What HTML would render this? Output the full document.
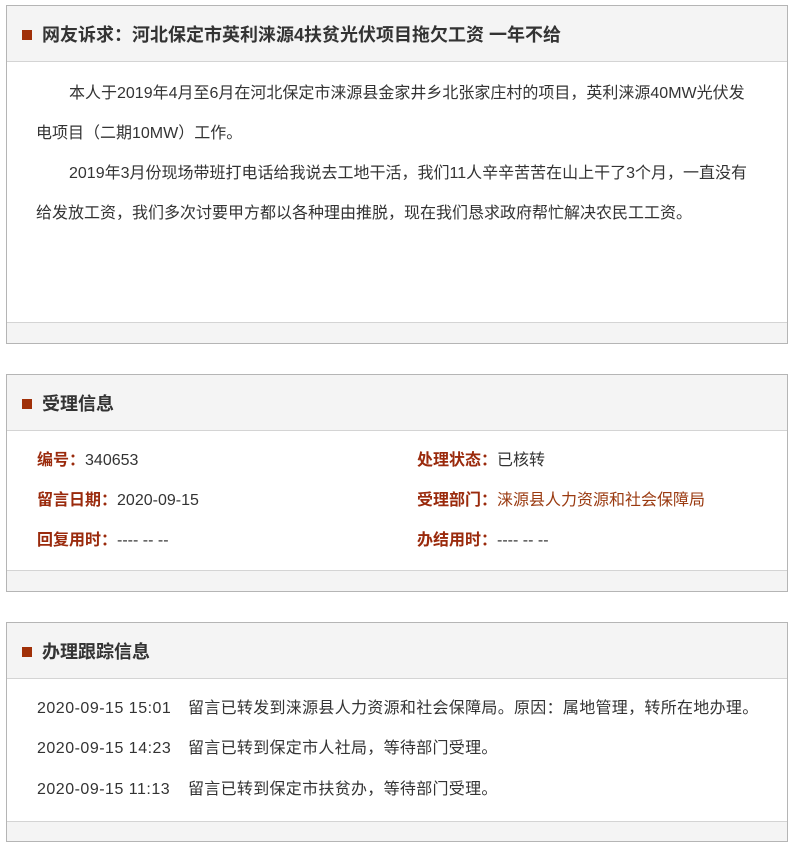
<!DOCTYPE html>
<html><head><meta charset="utf-8"><style>
*{margin:0;padding:0;box-sizing:border-box}
body{width:790px;height:826px;overflow:hidden;background:#fff;font-family:"Liberation Sans","Noto Sans CJK SC",sans-serif;color:#333;font-size:16px}
.box{position:absolute;left:6px;width:782px;border:1px solid #b5b5b5;background:#fff;overflow:hidden}
.hd{height:56px;background:#f4f4f4;border-bottom:1px solid #d4d4d4;position:relative}
.hd i{position:absolute;left:15px;top:24px;width:10px;height:10px;background:#a03008}
.hd b{position:absolute;left:35px;top:17px;font-size:18px;color:#333;line-height:24px;white-space:nowrap}
.ft{position:absolute;left:0;right:0;bottom:0;height:21px;background:#f4f4f4;border-top:1px solid #d4d4d4}
.l{position:absolute;white-space:nowrap;line-height:20px}
.lb{color:#9a2a0c;font-weight:bold}
.br{color:#9a3a10}
</style></head><body>
<div class="box" style="top:5px;height:339px">
<div class="hd"><i></i><b>网友诉求：河北保定市英利涞源4扶贫光伏项目拖欠工资 一年不给</b></div>
<div class="l" style="left:62px;top:78px">本人于2019年4月至6月在河北保定市涞源县金家井乡北张家庄村的项目，英利涞源40MW光伏发</div>
<div class="l" style="left:29px;top:118px">电项目（二期10MW）工作。</div>
<div class="l" style="left:62px;top:158px">2019年3月份现场带班打电话给我说去工地干活，我们11人辛辛苦苦在山上干了3个月，一直没有</div>
<div class="l" style="left:29px;top:198px">给发放工资，我们多次讨要甲方都以各种理由推脱，现在我们恳求政府帮忙解决农民工工资。</div>
<div class="ft"></div>
</div>
<div class="box" style="top:374px;height:218px">
<div class="hd"><i></i><b>受理信息</b></div>
<div class="l" style="left:30px;top:76px"><span class="lb">编号：</span>340653</div>
<div class="l" style="left:30px;top:116px"><span class="lb">留言日期：</span>2020-09-15</div>
<div class="l" style="left:30px;top:156px"><span class="lb">回复用时：</span>---- -- --</div>
<div class="l" style="left:410px;top:76px"><span class="lb">处理状态：</span>已核转</div>
<div class="l" style="left:410px;top:116px"><span class="lb">受理部门：</span><span class="br">涞源县人力资源和社会保障局</span></div>
<div class="l" style="left:410px;top:156px"><span class="lb">办结用时：</span>---- -- --</div>
<div class="ft"></div>
</div>
<div class="box" style="top:622px;height:220px">
<div class="hd"><i></i><b>办理跟踪信息</b></div>
<div class="l" style="left:30px;top:76px;letter-spacing:0.5px">2020-09-15 15:01</div><div class="l" style="left:181px;top:76px;letter-spacing:0.3px">留言已转发到涞源县人力资源和社会保障局。原因：属地管理，转所在地办理。</div>
<div class="l" style="left:30px;top:116px;letter-spacing:0.5px">2020-09-15 14:23</div><div class="l" style="left:181px;top:116px;letter-spacing:0.3px">留言已转到保定市人社局，等待部门受理。</div>
<div class="l" style="left:30px;top:157px;letter-spacing:0.5px">2020-09-15 11:13</div><div class="l" style="left:181px;top:157px;letter-spacing:0.3px">留言已转到保定市扶贫办，等待部门受理。</div>
<div style="position:absolute;left:0;right:0;top:198px;height:30px;background:#f4f4f4;border-top:1px solid #d4d4d4"></div>
</div>
</body></html>
